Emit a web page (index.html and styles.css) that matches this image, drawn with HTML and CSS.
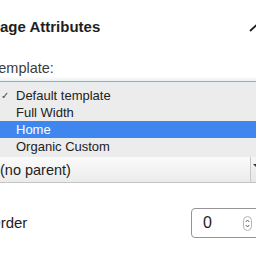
FILE: index.html
```html
<!DOCTYPE html>
<html>
<head>
<meta charset="utf-8">
<link rel="stylesheet" href="styles.css">
</head>
<body>
<div class="panel">
  <div class="header">
    <h2 class="title">Page Attributes</h2>
    <svg class="chevron" width="14" height="8" viewBox="0 0 14 8"><path d="M1 7 L7 1.5 L13 7" fill="none" stroke="#1e1e1e" stroke-width="1.8"/></svg>
  </div>
  <div class="label">Template:</div>
  <div class="select-top"></div>
  <ul class="menu">
    <li class="item checked"><span class="check">✓</span>Default template</li>
    <li class="item">Full Width</li>
    <li class="item active">Home</li>
    <li class="item">Organic Custom</li>
  </ul>
  <div class="select">
    <span class="select-text">(no parent)</span>
    <span class="select-btn"><span class="arrow"></span></span>
  </div>
  <div class="order-row">
    <span class="order-label">Order</span>
    <div class="number">
      <span class="num-val">0</span>
      <svg class="spinner" width="9" height="15" viewBox="0 0 9 15"><rect x="0.5" y="0.5" width="8" height="14" rx="4" fill="#fff" stroke="#b5b5b5"/><path d="M2.8 6 L4.5 4 L6.2 6 M2.8 9 L4.5 11 L6.2 9" fill="none" stroke="#555" stroke-width="0.9"/></svg>
    </div>
  </div>
</div>
</body>
</html>
```
FILE: styles.css
```css
html, body {
  margin: 0;
  padding: 0;
  background: #fff;
  overflow: hidden;
}
body {
  width: 256px;
  height: 256px;
  font-family: "Liberation Sans", Arial, sans-serif;
  color: #1e1e1e;
}
.panel {
  margin-left: -10px;
  width: 272px;
}
.header {
  display: flex;
  align-items: center;
  justify-content: space-between;
  padding-top: 17px;
  height: 20px;
}
.title {
  margin: 0;
  font-size: 15px;
  line-height: 20px;
  font-weight: bold;
  color: #1e1e1e;
}
.chevron {
  margin-right: -1px;
  margin-top: 1px;
}
.label {
  margin-top: 22px;
  font-size: 14.5px;
  line-height: 18px;
  color: #3c3c3c;
  margin-left: 1px;
}
.select-top {
  height: 4px;
  background: linear-gradient(#fcfcfc, #efefef);
}
.menu {
  list-style: none;
  margin: 0;
  padding: 5px 0 2px;
  background: #ececec;
  border-top: 1px solid #86b3c8;
  box-shadow: inset 0 1px 0 #dfeef3;
}
.item {
  position: relative;
  height: 17px;
  line-height: 17px;
  font-size: 13px;
  padding-left: 26px;
  color: #222;
}
.item.active {
  background: #3f86ee;
  color: #fff;
}
.check {
  position: absolute;
  left: 11px;
  top: 0;
  font-family: "DejaVu Sans", sans-serif;
  font-size: 10px;
  color: #444;
}
.select {
  display: flex;
  justify-content: space-between;
  height: 25px;
  background: linear-gradient(#fbfbfb, #ebebeb);
  border-bottom: 1px solid #c4c4c4;
}
.select-text {
  padding-left: 10px;
  font-size: 14.5px;
  line-height: 26px;
  color: #222;
}
.select-btn {
  width: 11px;
  border-left: 1px solid #c8c8c8;
  position: relative;
  background: linear-gradient(#f6f6f6, #e6e6e6);
}
.arrow {
  position: absolute;
  left: 2px;
  top: 7px;
  width: 0;
  height: 0;
  border-left: 3px solid transparent;
  border-right: 3px solid transparent;
  border-top: 3px solid #333;
}
.order-row {
  display: flex;
  align-items: center;
  justify-content: space-between;
  margin-top: 25px;
}
.order-label {
  font-size: 15px;
  line-height: 30px;
  color: #222;
  margin-left: -1px;
}
.number {
  width: 78px;
  height: 28px;
  border: 1px solid #949494;
  border-radius: 4px;
  display: flex;
  align-items: center;
  box-sizing: content-box;
  margin-right: -9px;
}
.num-val {
  font-size: 16px;
  margin-left: 11px;
  width: 40px;
  color: #1e1e1e;
}
.spinner {
  display: block;
}
```
